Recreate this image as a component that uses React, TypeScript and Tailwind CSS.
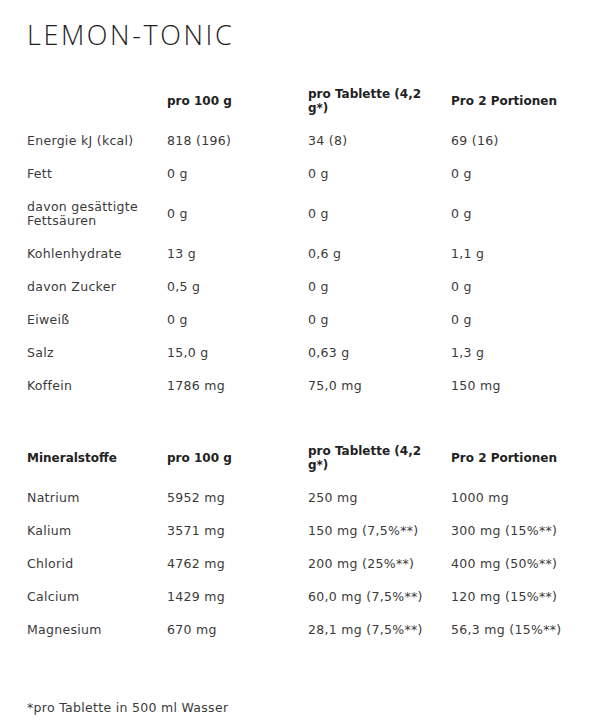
const bodyFont = { fontFamily: '"DejaVu Sans", "Liberation Sans", sans-serif' };

type Row = [React.ReactNode, React.ReactNode, React.ReactNode, React.ReactNode];

const nutrition: Row[] = [
  ["Energie kJ (kcal)", "818 (196)", "34 (8)", "69 (16)"],
  ["Fett", "0 g", "0 g", "0 g"],
  [
    <>
      davon gesättigte
      <br />
      Fettsäuren
    </>,
    "0 g",
    "0 g",
    "0 g",
  ],
  ["Kohlenhydrate", "13 g", "0,6 g", "1,1 g"],
  ["davon Zucker", "0,5 g", "0 g", "0 g"],
  ["Eiweiß", "0 g", "0 g", "0 g"],
  ["Salz", "15,0 g", "0,63 g", "1,3 g"],
  ["Koffein", "1786 mg", "75,0 mg", "150 mg"],
];

const minerals: Row[] = [
  ["Natrium", "5952 mg", "250 mg", "1000 mg"],
  ["Kalium", "3571 mg", "150 mg (7,5%**)", "300 mg (15%**)"],
  ["Chlorid", "4762 mg", "200 mg (25%**)", "400 mg (50%**)"],
  ["Calcium", "1429 mg", "60,0 mg (7,5%**)", "120 mg (15%**)"],
  ["Magnesium", "670 mg", "28,1 mg (7,5%**)", "56,3 mg (15%**)"],
];

function Cells({ row, bold }: { row: Row; bold?: boolean }) {
  return (
    <>
      {row.map((c, i) => (
        <div
          key={i}
          className={
            "flex items-center py-[9.5px] leading-[14px] " +
            (bold ? "text-[12px] font-bold text-[#222]" : "text-[12.5px] tracking-[0.3px] text-[#3a3a3a]")
          }
        >
          <div>{c}</div>
        </div>
      ))}
    </>
  );
}

function Table({ head, rows }: { head: Row; rows: Row[] }) {
  return (
    <div className="grid grid-cols-[140px_141px_143px_1fr]">
      <Cells row={head} bold />
      {rows.map((r, i) => (
        <Cells key={i} row={r} />
      ))}
    </div>
  );
}

const tabletteHead = (
  <>
    pro Tablette (4,2
    <br />
    g*)
  </>
);

export default function App() {
  return (
    <div className="min-h-[724px] bg-white px-[27px] pt-[18px]" style={bodyFont}>
      <h1
        className="text-[27px] font-light leading-[34px] tracking-[2.6px] text-[#1e1e1e]"
        style={{ fontFamily: '"Open Sans", "Liberation Sans", sans-serif' }}
      >
        LEMON-TONIC
      </h1>
      <div className="mt-[25px]">
        <Table head={["", "pro 100 g", tabletteHead, "Pro 2 Portionen"]} rows={nutrition} />
      </div>
      <div className="mt-[32px]">
        <Table head={["Mineralstoffe", "pro 100 g", tabletteHead, "Pro 2 Portionen"]} rows={minerals} />
      </div>
      <p className="mt-[55px] text-[12.5px] leading-[14px] tracking-[0.3px] text-[#3a3a3a]">
        *pro Tablette in 500 ml Wasser
      </p>
    </div>
  );
}
